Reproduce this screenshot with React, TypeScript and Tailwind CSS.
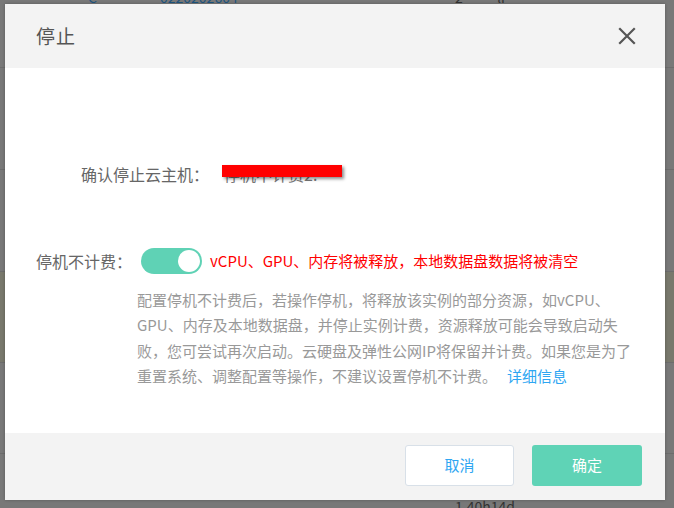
import React from "react";

const font = { fontFamily: '"Noto Sans CJK SC", "Noto Sans", sans-serif' };

export default function App() {
  return (
    <div className="relative w-[674px] h-[508px] overflow-hidden bg-[#787878]" style={font}>
      {/* background page (dimmed) */}
      <div className="flex flex-col">
        <div className="h-[68px] border-b border-[#6c6c6c] relative">
          <div className="absolute top-[-10px] left-[88px] text-[14px] text-[#1d5580] leading-[14px]">C</div>
          <div className="absolute top-[-10px] left-[160px] text-[14px] text-[#1d5580] leading-[14px]">0220202604</div>
          <div className="absolute top-[-10px] left-[455px] text-[14px] text-[#333] leading-[14px]">2</div>
          <div className="absolute top-[-10px] left-[497px] text-[14px] text-[#333] leading-[14px]">li</div>
        </div>
        <div className="h-[102px] border-b border-[#6c6c6c] bg-[#787878]" />
        <div className="h-[102px] border-b border-[#6c6c6c] bg-[#787878]" />
        <div className="h-[91px] border-b border-[#6c6c6c] bg-[#78786c]" />
        <div className="h-[91px] border-b border-[#6c6c6c] bg-[#787878]" />
        <div className="h-[54px] relative">
          <div className="absolute top-[45px] left-[455px] text-[14px] leading-[14px] text-[#333]">1.40h14d</div>
        </div>
      </div>

      {/* modal */}
      <div className="absolute left-[5px] top-[4px] w-[660px] h-[496px] flex flex-col bg-white shadow-[0_0_3px_rgba(0,0,0,0.25)]">
        <div className="h-[64px] bg-[#f3f3f3] flex items-center justify-between pl-[31px] pr-[29px]">
          <span className="text-[19px] text-[#555] tracking-[1px]">停止</span>
          <svg width="18" height="18" viewBox="0 0 18 18" fill="none">
            <path d="M2 2 L16 16 M16 2 L2 16" stroke="#555" strokeWidth="2.2" strokeLinecap="square" />
          </svg>
        </div>

        <div className="flex-1 flex flex-col">
          <div className="pt-[94px] pl-[76px] flex items-center h-[24px] box-content">
            <span className="text-[16px] text-[#666] leading-[24px]">确认停止云主机：</span>
            <span className="relative ml-[15px] text-[16px] text-[#777] leading-[24px]">
              停机不计费2.
              <span className="absolute left-[-2px] top-[3px] w-[120px] h-[12px] bg-[#ff0000] shadow-[2px_2px_3px_rgba(0,0,0,0.45)]" />
            </span>
          </div>

          <div className="mt-[62px] pl-[31px] flex items-center h-[26px]">
            <span className="text-[16px] text-[#666] w-[105px]">停机不计费：</span>
            <div className="w-[61px] h-[26px] rounded-full bg-[#5fd2b5] flex items-center justify-end pr-[2px]">
              <div className="w-[22px] h-[22px] rounded-full bg-white" />
            </div>
            <span className="ml-[8px] text-[15px] text-[#ff0000]">vCPU、GPU、内存将被释放，本地数据盘数据将被清空</span>
          </div>

          <div className="mt-[13px] pl-[132px] text-[15px] leading-[25.3px] text-[#999] flex flex-col whitespace-nowrap">
            <span>配置停机不计费后，若操作停机，将释放该实例的部分资源，如vCPU、</span>
            <span>GPU、内存及本地数据盘，并停止实例计费，资源释放可能会导致启动失</span>
            <span>败，您可尝试再次启动。云硬盘及弹性公网IP将保留并计费。如果您是为了</span>
            <span>
              重置系统、调整配置等操作，不建议设置停机不计费。
              <span className="ml-[10px] text-[#2ea6f2]">详细信息</span>
            </span>
          </div>
        </div>

        <div className="h-[67px] bg-[#f3f3f3] flex items-start justify-end pt-[12px] pr-[23px] gap-[18px]">
          <button className="w-[109px] h-[41px] bg-white border border-[#d8e0e8] rounded-[3px] text-[15px] text-[#2ea6f2]">取消</button>
          <button className="w-[110px] h-[41px] bg-[#5fd3b6] rounded-[3px] text-[15px] text-white">确定</button>
        </div>
      </div>
    </div>
  );
}
